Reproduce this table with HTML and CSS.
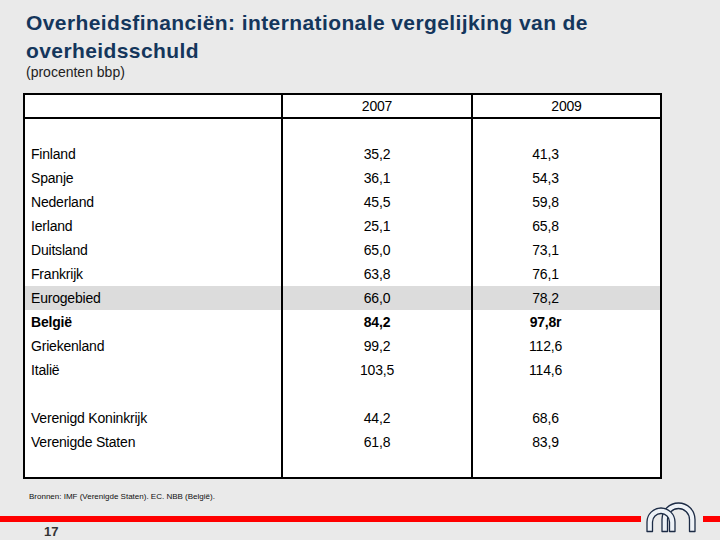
FILE: index.html
```html
<!DOCTYPE html>
<html lang="nl">
<head>
<meta charset="utf-8">
<title>Overheidsschuld</title>
<link rel="stylesheet" href="styles.css">
</head>
<body>
<div class="slide">
  <h1 class="title">Overheidsfinanciën: internationale vergelijking van de overheidsschuld</h1>
  <p class="subtitle">(procenten bbp)</p>

  <div class="table">
    <div class="row head">
      <div class="c1"></div>
      <div class="c2">2007</div>
      <div class="c3">2009</div>
    </div>
    <div class="row spacer-top"><div class="c1"></div><div class="c2"></div><div class="c3"></div></div>
    <div class="row"><div class="c1">Finland</div><div class="c2">35,2</div><div class="c3">41,3</div></div>
    <div class="row"><div class="c1">Spanje</div><div class="c2">36,1</div><div class="c3">54,3</div></div>
    <div class="row"><div class="c1">Nederland</div><div class="c2">45,5</div><div class="c3">59,8</div></div>
    <div class="row"><div class="c1">Ierland</div><div class="c2">25,1</div><div class="c3">65,8</div></div>
    <div class="row"><div class="c1">Duitsland</div><div class="c2">65,0</div><div class="c3">73,1</div></div>
    <div class="row"><div class="c1">Frankrijk</div><div class="c2">63,8</div><div class="c3">76,1</div></div>
    <div class="row shaded"><div class="c1">Eurogebied</div><div class="c2">66,0</div><div class="c3">78,2</div></div>
    <div class="row strong"><div class="c1">België</div><div class="c2">84,2</div><div class="c3">97,8r</div></div>
    <div class="row"><div class="c1">Griekenland</div><div class="c2">99,2</div><div class="c3">112,6</div></div>
    <div class="row"><div class="c1">Italië</div><div class="c2">103,5</div><div class="c3">114,6</div></div>
    <div class="row"><div class="c1"></div><div class="c2"></div><div class="c3"></div></div>
    <div class="row"><div class="c1">Verenigd Koninkrijk</div><div class="c2">44,2</div><div class="c3">68,6</div></div>
    <div class="row"><div class="c1">Verenigde Staten</div><div class="c2">61,8</div><div class="c3">83,9</div></div>
    <div class="row spacer-bottom"><div class="c1"></div><div class="c2"></div><div class="c3"></div></div>
  </div>

  <p class="source">Bronnen: IMF (Verenigde Staten). EC. NBB (België).</p>

  <div class="footer">
    <div class="footer-left">
      <div class="redbar"></div>
      <div class="pagenum">17</div>
    </div>
    <svg class="logo" width="62" height="32" viewBox="0 0 62 32" aria-hidden="true">
      <path d="M21 29.5 V17.5 A16.5 16.5 0 0 1 54 17.5 V29.5 H48.5 V17.5 A11 11 0 0 0 26.5 17.5 V29.5 Z" fill="#eef2f7" stroke="#1c2b45" stroke-width="1.3" stroke-linejoin="round"/>
      <path d="M6 29.5 V20 A14 14 0 0 1 34 20 V29.5 H28.5 V20 A8.5 8.5 0 0 0 11.5 20 V29.5 Z" fill="#eef2f7" stroke="#1c2b45" stroke-width="1.3" stroke-linejoin="round"/>
    </svg>
    <div class="redbar short"></div>
  </div>
</div>
</body>
</html>
```

FILE: styles.css
```css
html, body {
  margin: 0;
  padding: 0;
}
body {
  background: #eaeaea;
  font-family: "Liberation Sans", Arial, sans-serif;
  color: #000;
}
.slide {
  width: 720px;
  height: 540px;
  overflow: hidden;
}
.title {
  margin: 9px 0 0 26px;
  width: 620px;
  font-size: 21px;
  line-height: 28px;
  font-weight: bold;
  letter-spacing: 0.4px;
  color: #14365c;
}
.subtitle {
  margin: 0 0 0 26px;
  font-size: 14px;
  line-height: 14px;
  color: #222;
}
.table {
  margin: 14px 0 0 23px;
  width: 639px;
  box-sizing: border-box;
  border: 2px solid #000;
  background: #fff;
}
.row {
  display: grid;
  grid-template-columns: 256px 190px 189px;
  height: 24px;
  font-size: 14px;
  line-height: 24px;
  letter-spacing: -0.2px;
}
.row > div {
  box-sizing: border-box;
  white-space: nowrap;
}
.c1 {
  padding-left: 6px;
}
.c2, .c3 {
  border-left: 2px solid #000;
  text-align: center;
}
.c3 {
  padding-right: 42px;
}
.head {
  height: 24px;
  line-height: 22px;
  border-bottom: 2px solid #000;
  box-sizing: border-box;
}
.head .c3 {
  padding-right: 0;
}
.spacer-top {
  height: 23px;
}
.spacer-bottom {
  height: 23px;
}
.shaded {
  background: #dcdcdc;
}
.strong {
  font-weight: bold;
}
.source {
  margin: 13px 0 0 29px;
  font-size: 8px;
  line-height: 10px;
  color: #111;
}
.footer {
  display: flex;
  align-items: flex-start;
}
.footer-left {
  flex: 1;
  padding-top: 14px;
}
.redbar {
  height: 6px;
  background: #ff0000;
}
.redbar.short {
  width: 17px;
  margin-top: 14px;
}
.pagenum {
  margin-top: 2px;
  padding-left: 44px;
  font-size: 13px;
  line-height: 15px;
  font-weight: bold;
  color: #333;
}
.logo {
  display: block;
  flex: none;
}
```
